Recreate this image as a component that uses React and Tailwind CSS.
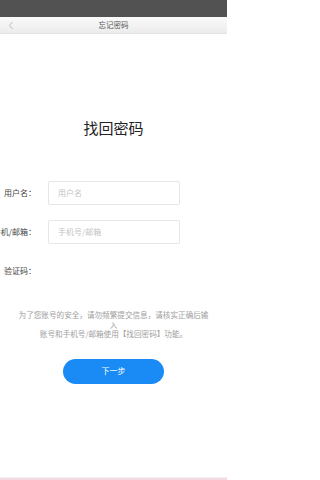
import React from "react";

const font = { fontFamily: '"Noto Sans CJK SC", "Noto Sans", sans-serif' };

function Row({ label, placeholder }) {
  return (
    <div className="flex items-center h-[24px]">
      <div className="w-[36px] flex justify-end whitespace-nowrap text-[8px] text-[#444] leading-none">
        {label}
      </div>
      {placeholder !== undefined ? (
        <div className="ml-[12px] w-[132px] h-[24px] border border-[#e6e6e6] rounded-[2px] flex items-center pl-[9px] text-[8px] text-[#c4c4c4] leading-none">
          {placeholder}
        </div>
      ) : null}
    </div>
  );
}

export default function App() {
  return (
    <div
      className="w-[227px] h-[480px] bg-white flex flex-col overflow-hidden"
      style={font}
    >
      <div className="h-[17px] bg-[#525252] shrink-0" />
      <div className="h-[17px] shrink-0 relative flex items-center justify-center bg-gradient-to-b from-[#fafafa] to-[#ececec] border-b border-[#e2e2e2]">
        <svg
          className="absolute left-[8px] top-[4px]"
          width="6"
          height="9"
          viewBox="0 0 6 9"
          fill="none"
        >
          <path d="M4.5 1 L1.5 4.5 L4.5 8" stroke="#b5b5b5" strokeWidth="0.9" />
        </svg>
        <span className="text-[7.5px] text-[#555] leading-none">忘记密码</span>
      </div>

      <div className="mt-[84px] text-center text-[15px] leading-[20px] text-[#222]">
        找回密码
      </div>

      <div className="mt-[43px] flex flex-col gap-[15px]">
        <Row label="用户名：" placeholder="用户名" />
        <Row label="手机/邮箱：" placeholder="手机号/邮箱" />
        <Row label="验证码：" />
      </div>

      <div className="mt-[27px] px-[16px] text-center text-[7.6px] leading-[9.5px] text-[#a0a0a0]">
        为了您账号的安全，请勿频繁提交信息，请核实正确后输入
        <br />
        账号和手机号/邮箱使用【找回密码】功能。
      </div>

      <div className="mt-[20px] flex justify-center">
        <div className="w-[101px] h-[25px] rounded-full bg-[#1a8bf5] flex items-center justify-center text-white text-[8px] leading-none">
          下一步
        </div>
      </div>

      <div className="mt-auto h-[1px] bg-[#f2f2f2]" />
      <div className="h-[2px] bg-[#f3d9e2]" />
    </div>
  );
}
